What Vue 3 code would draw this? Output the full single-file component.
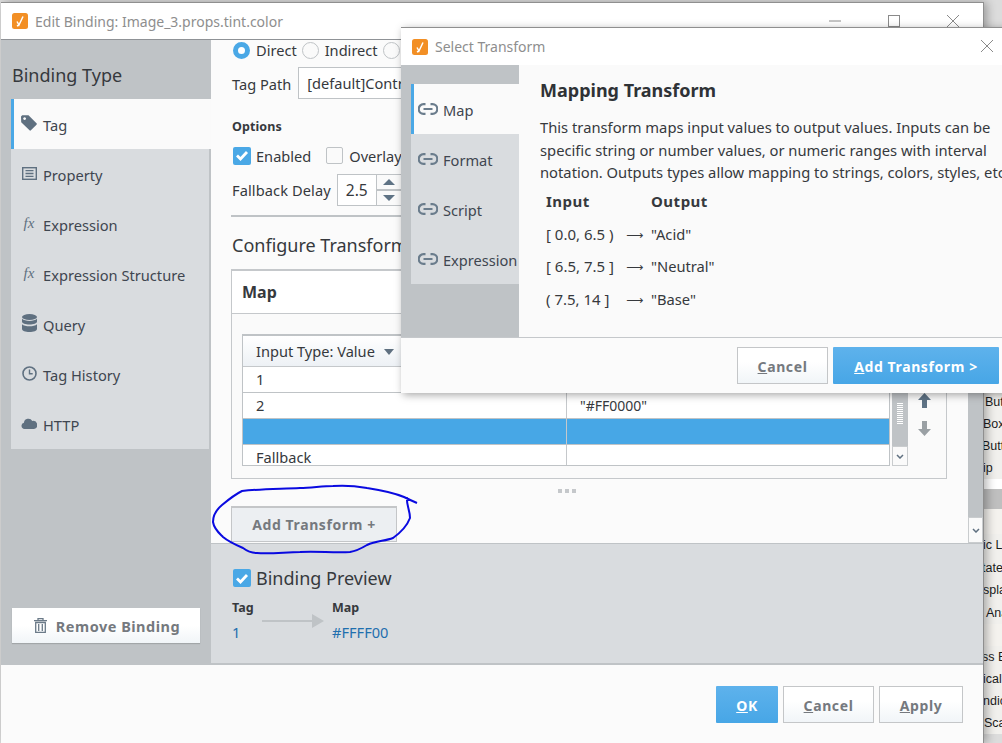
<script setup>
const sideTabs = [
  { label: 'Tag', icon: 'tag', active: true },
  { label: 'Property', icon: 'prop' },
  { label: 'Expression', icon: 'fx' },
  { label: 'Expression Structure', icon: 'fx' },
  { label: 'Query', icon: 'db' },
  { label: 'Tag History', icon: 'clock' },
  { label: 'HTTP', icon: 'cloud' }
]
const transformTabs = [
  { label: 'Map', active: true },
  { label: 'Format' },
  { label: 'Script' },
  { label: 'Expression' }
]
const mapping = [
  { input: '[ 0.0, 6.5 )', output: '"Acid"' },
  { input: '[ 6.5, 7.5 ]', output: '"Neutral"' },
  { input: '( 7.5, 14 ]', output: '"Base"' }
]
const rows = [
  { a: '1', b: '', h: 26 },
  { a: '2', b: '"#FF0000"', h: 26 },
  { a: '', b: '', h: 26, selected: true },
  { a: 'Fallback', b: '', h: 22 }
]
const backList = [
  { t: 'But', x: 45, h: 23 }, { t: 'Box', x: 43, h: 22 }, { t: 'Butt', x: 42, h: 22 }, { t: 'ip', x: 43, h: 22 },
  { gap: 10, fill: '#ffffff' }, { gap: 20, fill: '#bfbfbf' }, { gap: 25, fill: '#f4f2ee' },
  { t: 'ic L', x: 43, h: 22 }, { t: 'tate', x: 42, h: 23 }, { t: 'spla', x: 43, h: 22 }, { t: 'Ana', x: 46, h: 23 },
  { gap: 22, fill: '#f4f2ee' },
  { t: 'ss E', x: 42, h: 22 }, { t: 'ical', x: 43, h: 22 }, { t: 'ndic', x: 43, h: 22 }, { t: 'Sca', x: 44, h: 22 }
]
</script>

<template>
  <div class="desktop">
    <div class="back-list">
      <template v-for="(item, i) in backList" :key="i">
        <div v-if="item.gap" :style="{ height: item.gap + 'px', background: item.fill }"></div>
        <div v-else class="back-row" :style="{ height: item.h + 'px', paddingLeft: item.x + 'px' }">{{ item.t }}</div>
      </template>
    </div>

    <section class="window main">
      <header class="titlebar main-title">
        <svg class="app-icon" viewBox="0 0 16 16"><rect width="16" height="16" rx="2.5" fill="#f28f25"/><path d="M5 8.5 7 12 11 3.5M7 12l-2 1" fill="none" stroke="#fff" stroke-width="1.5"/></svg>
        <span class="title-text">Edit Binding: Image_3.props.tint.color</span>
        <div class="controls">
          <svg width="12" height="12" viewBox="0 0 12 12"><path d="M0 6h12" stroke="#8a8a8a"/></svg>
          <svg width="12" height="12" viewBox="0 0 12 12"><rect x=".5" y=".5" width="11" height="11" fill="none" stroke="#8a8a8a"/></svg>
          <svg width="12" height="12" viewBox="0 0 12 12"><path d="M0 0l12 12M12 0 0 12" stroke="#8a8a8a"/></svg>
        </div>
      </header>

      <div class="main-body">
        <aside class="sidebar">
          <h2 class="side-heading">Binding Type</h2>
          <nav class="side-tabs">
            <div v-for="t in sideTabs" :key="t.label" class="side-tab" :class="{ active: t.active }">
              <span class="side-icon">
                <svg v-if="t.icon === 'tag'" width="16" height="16" viewBox="0 0 16 16"><path d="M0 1.5 1.2.3 7.5.3l8 8a1 1 0 0 1 0 1.4l-5.6 5.6a1 1 0 0 1-1.4 0l-8.300-8zM3.600 2.200a1.400 1.400 0 1 0 .01 0z" fill="#5f7080" fill-rule="evenodd"/></svg>
                <svg v-else-if="t.icon === 'prop'" width="15" height="13" viewBox="0 0 15 13"><rect x=".7" y=".7" width="13.6" height="11.6" fill="none" stroke="#5f7080" stroke-width="1.4"/><path d="M3.500 3.600h8M3.500 6.500h8M3.500 9.400h8" stroke="#5f7080" stroke-width="1.400"/></svg>
                <span v-else-if="t.icon === 'fx'" class="fx">fx</span>
                <svg v-else-if="t.icon === 'db'" width="15" height="18" viewBox="0 0 15 18"><g fill="#5f7080"><ellipse cx="7.500" cy="3" rx="7.500" ry="3"/><path d="M0 4.800v3c0 1.600 3.400 2.800 7.500 2.800S15 9.400 15 7.800v-3c-1.500 1.500-4.400 2.100-7.500 2.100S1.500 6.300 0 4.800zM0 10.200v4.800C0 16.700 3.400 18 7.500 18s7.500-1.300 7.500-3v-4.800c-1.500 1.500-4.400 2.100-7.500 2.100S1.500 11.700 0 10.200z"/></g></svg>
                <svg v-else-if="t.icon === 'clock'" width="15" height="15" viewBox="0 0 15 15"><circle cx="7.500" cy="7.500" r="6.500" fill="none" stroke="#5f7080" stroke-width="1.600"/><path d="M7.500 3.500v4.300h3.200" fill="none" stroke="#5f7080" stroke-width="1.400"/></svg>
                <svg v-else width="16" height="11" viewBox="0 0 16 11"><path d="M3.500 11a3.200 3.200 0 0 1-.6-6.300A4.500 4.500 0 0 1 11.300 3 3.100 3.100 0 0 1 13 11z" fill="#5f7080"/></svg>
              </span>
              <span>{{ t.label }}</span>
            </div>
          </nav>
          <button class="remove">
            <svg width="13" height="15" viewBox="0 0 13 15"><path d="M4 2V.7h5V2M0 2.600h13M1.700 4.500h9.600V14.300H1.700zM4.700 6v7M8.300 6v7" fill="none" stroke="#6b7a88" stroke-width="1.300"/></svg>
            <span>Remove Binding</span>
          </button>
        </aside>

        <div class="content-col">
          <div class="content-scroll">
            <div class="content">
              <div class="radio-row">
                <span class="radio on"></span><span>Direct</span>
                <span class="radio"></span><span>Indirect</span>
                <span class="radio"></span><span>Expression</span>
              </div>
              <div class="path-row">
                <span>Tag Path</span>
                <div class="path-input">[default]Controller/Tag</div>
              </div>
              <div class="options">Options</div>
              <div class="check-row">
                <span class="check on"><svg width="14" height="11" viewBox="0 0 14 11"><path d="M2 5.500 5.500 9 12 2" fill="none" stroke="#fff" stroke-width="2.800"/></svg></span>
                <span>Enabled</span>
                <span class="check"></span>
                <span>Overlay Opt-Out</span>
              </div>
              <div class="delay-row">
                <span>Fallback Delay</span>
                <div class="spinner">
                  <span class="spin-val">2.5</span>
                  <span class="spin-btns"><i class="up"></i><i class="down"></i></span>
                </div>
              </div>
              <hr class="divider" />
              <h3 class="config">Configure Transforms</h3>
              <div class="map-box">
                <div class="map-head">Map</div>
                <div class="map-body">
                  <div class="grid-wrap">
                    <div class="grid">
                      <div class="grid-head">
                        <div class="cell-a head-a">Input Type: Value <i class="caret"></i></div>
                        <div class="cell-b"></div>
                      </div>
                      <div v-for="(r, i) in rows" :key="i" class="grid-row" :class="{ sel: r.selected }" :style="{ height: r.h + 'px' }">
                        <div class="cell-a">{{ r.a }}</div>
                        <div class="cell-b">{{ r.b }}</div>
                      </div>
                    </div>
                    <div class="grid-scroll">
                      <div class="grip"></div>
                      <div class="scroll-btn small"><svg width="8" height="5" viewBox="0 0 8 5"><path d="M1 1l3 3 3-3" fill="none" stroke="#5f7080" stroke-width="1.500"/></svg></div>
                    </div>
                    <div class="move">
                      <svg width="13" height="15" viewBox="0 0 13 15"><path d="M6.500 0 13 7H9v8H4V7H0z" fill="#5f7385"/></svg>
                      <svg width="13" height="15" viewBox="0 0 13 15"><path d="M6.500 15 13 8H9V0H4v8H0z" fill="#9aa0a4"/></svg>
                    </div>
                  </div>
                </div>
              </div>
              <div class="dots"><i></i><i></i><i></i></div>
              <button class="add-transform">Add Transform +</button>
            </div>
            <div class="v-scroll">
              <div class="scroll-btn"><svg width="8" height="5" viewBox="0 0 8 5"><path d="M1 1l3 3 3-3" fill="none" stroke="#5f7080" stroke-width="1.500"/></svg></div>
            </div>
          </div>
          <div class="preview">
            <div class="preview-head">
              <span class="check on"><svg width="14" height="11" viewBox="0 0 14 11"><path d="M2 5.500 5.500 9 12 2" fill="none" stroke="#fff" stroke-width="2.800"/></svg></span>
              <span>Binding Preview</span>
            </div>
            <div class="flow">
              <div class="flow-col">
                <b>Tag</b>
                <span class="val">1</span>
              </div>
              <svg class="flow-arrow" width="62" height="14" viewBox="0 0 62 14"><path d="M0 6h50v2H0z" fill="#bfc3c6"/><path d="M50 0l12 7-12 7z" fill="#bfc3c6"/></svg>
              <div class="flow-col">
                <b>Map</b>
                <span class="val">#FFFF00</span>
              </div>
            </div>
          </div>
        </div>
      </div>

      <footer class="main-foot">
        <button class="btn primary ok"><u>O</u>K</button>
        <button class="btn cancel-main"><u>C</u>ancel</button>
        <button class="btn apply"><u>A</u>pply</button>
      </footer>
    </section>

    <svg class="scribble" width="1002" height="743" viewBox="0 0 1002 743">
      <path d="M417 503C410 500 406 498 404 497C392 492 380 490 367 488C356 486 345 485 333 486C322 486 311 488 300 488C280 489 260 489 242 491C234 495 228 500 222 505C216 510 213 516 213 522C214 529 219 533 223 537C229 542 236 545 243 548C247 551 252 553 257 553C272 554 286 552 300 552C317 551 334 553 350 552C357 551 362 548 367 545C376 541 385 541 393 538C400 533 407 526 410 518C410 510 406 504 407 497" fill="none" stroke="#0a0ae0" stroke-width="2"/>
    </svg>

    <section class="window modal">
      <header class="titlebar modal-title">
        <svg class="app-icon" viewBox="0 0 16 16"><rect width="16" height="16" rx="2.500" fill="#f28f25"/><path d="M5 8.500 7 12 11 3.500M7 12l-2 1" fill="none" stroke="#fff" stroke-width="1.500"/></svg>
        <span class="title-text">Select Transform</span>
        <svg class="modal-x" width="12" height="12" viewBox="0 0 12 12"><path d="M0 0l12 12M12 0 0 12" stroke="#8a8a8a"/></svg>
      </header>
      <div class="modal-body">
        <aside class="modal-side">
          <div v-for="t in transformTabs" :key="t.label" class="modal-tab" :class="{ active: t.active }">
            <svg width="20" height="12" viewBox="0 0 20 12"><path d="M7.500 1.200H5.500a4.800 4.800 0 0 0 0 9.600h2M12.500 1.200h2a4.800 4.800 0 0 1 0 9.600h-2M5.500 6h9" fill="none" stroke="#6a7c8c" stroke-width="2.200"/></svg>
            <span>{{ t.label }}</span>
          </div>
        </aside>
        <div class="modal-content">
          <h2 class="modal-heading">Mapping Transform</h2>
          <p class="modal-desc">
            <span>This transform maps input values to output values. Inputs can be</span>
            <span>specific string or number values, or numeric ranges with interval</span>
            <span>notation. Outputs types allow mapping to strings, colors, styles, etc.</span>
          </p>
          <div class="map-table">
            <div class="mt-head"><b>Input</b><b>Output</b></div>
            <div v-for="m in mapping" :key="m.input" class="mt-row">
              <span class="mt-in">{{ m.input }}</span>
              <span class="mt-arrow">⟶</span>
              <span class="mt-out">{{ m.output }}</span>
            </div>
          </div>
        </div>
      </div>
      <footer class="modal-foot">
        <button class="btn modal-cancel"><u>C</u>ancel</button>
        <button class="btn primary add"><u>A</u>dd Transform &gt;</button>
      </footer>
    </section>
  </div>
</template>

<style>
html, body { margin: 0; overflow: hidden; background: #d8d8d8; }
</style>

<style scoped>
.desktop {
  position: relative;
  width: 1002px;
  height: 743px;
  overflow: hidden;
  font-family: "Noto Sans", "Open Sans", sans-serif;
  font-size: 14px;
  color: #36393d;
  background: #dcdcdc;
}
.back-list {
  position: absolute;
  left: 940px;
  top: 0;
  width: 62px;
  padding-top: 390px;
  font-family: "Liberation Sans", sans-serif;
  font-size: 12.5px;
  color: #1c1c1c;
}
.back-row { display: flex; align-items: center; white-space: nowrap; box-sizing: border-box; background: #f1f0ed; }
.window {
  position: absolute;
  background: #fbfbfb;
  box-sizing: border-box;
  display: flex;
  flex-direction: column;
}
.main {
  left: 1px;
  top: 2px;
  width: 983px;
  height: 741px;
  border-top: 1px solid #8f8f8f;
  border-right: 1px solid #8f8f8f;
  box-shadow: 3px 0 9px rgba(0,0,0,.3);
}
.modal {
  left: 401px;
  top: 27px;
  width: 640px;
  height: 366px;
  border-top: 1px solid #8f8f8f;
  box-shadow: 2px 2px 8px rgba(0,0,0,.35);
}
.titlebar { display: flex; align-items: center; background: #fff; flex: none; color: #8e8e8e; }
.main-title { height: 37px; padding-left: 11px; font-size: 14px; border-bottom: 1px solid #8f9296; box-sizing: border-box; }
.main-title .app-icon { width: 16px; height: 16px; }
.title-text { margin-left: 7px; }
.controls { margin-left: auto; display: flex; gap: 47px; padding-right: 24px; }
.modal-title { height: 37px; padding-left: 11px; font-size: 14px; }
.modal-title .app-icon { width: 16px; height: 16px; }
.modal-x { position: absolute; left: 580px; top: 12px; }
.main-body { display: flex; height: 625px; flex: none; }
.sidebar {
  width: 210px;
  flex: none;
  background: #bfc3c6;
  display: flex;
  flex-direction: column;
  padding: 0 0 22px 10px;
  box-sizing: border-box;
}
.side-heading { margin: 0; font-size: 18px; font-weight: 400; height: 59px; padding-top: 22px; padding-left: 1px; box-sizing: border-box; line-height: 26px; }
.side-tabs { width: 198px; background: #d9dcdf; }
.side-tab { height: 50px; display: flex; align-items: center; padding: 2px 0 0 10px; gap: 6px; box-sizing: border-box; font-size: 14.65px; color: #3f4650; }
.side-tab.active { background: #fafafa; width: 200px; border-left: 3px solid #4aa8e6; padding-left: 7px; }
.side-icon { width: 16px; height: 18px; display: flex; align-items: center; justify-content: center; flex: none; margin-top: -4px; }
.fx { font-family: "Liberation Serif", serif; font-style: italic; font-size: 15px; color: #5f7080; }
.remove {
  margin-top: auto;
  margin-left: 1px;
  width: 188px;
  height: 35px;
  border: 0;
  background: linear-gradient(#fff 50%, #f1f5f8);
  box-shadow: 0 1px 1px rgba(0,0,0,.15);
  font: 700 14.5px "Noto Sans", sans-serif;
  color: #75797e;
  display: flex;
  align-items: center;
  justify-content: center;
  gap: 9px;
  letter-spacing: .5px;
  padding: 0 0 0 2px;
}
.content-col { flex: 1; min-width: 0; display: flex; flex-direction: column; }
.content-scroll { height: 503px; flex: none; display: flex; overflow: hidden; }
.content { flex: 1; min-width: 0; padding: 0 21px 0 20px; box-sizing: border-box; }
.v-scroll { width: 15px; flex: none; background: #bfc3c6; display: flex; flex-direction: column; justify-content: flex-end; }
.scroll-btn { height: 26px; background: #fafafa; display: flex; align-items: center; justify-content: center; border: 1px solid #c9ccce; box-sizing: border-box; }
.scroll-btn.small { height: 20px; }
.radio-row { height: 20px; display: flex; align-items: center; gap: 6px; white-space: nowrap; font-size: 14.6px; margin-left: 2px; }
.radio { width: 17px; height: 17px; border-radius: 50%; border: 1px solid #bfc3c6; background: #fafafa; box-sizing: border-box; flex: none; margin-left: -1px; }
.radio.on { border: 5px solid #4aa8e6; background: #fff; margin-left: 0; }
.path-row { margin-top: 7px; height: 32px; display: flex; align-items: center; gap: 7px; font-size: 14.6px; padding-left: 1px; }
.path-row > span { padding-top: 2px; }
.path-input { width: 400px; height: 32px; box-sizing: border-box; border: 1px solid #bfc3c6; border-right: 0; padding-left: 8px; line-height: 30px; background: #fff; white-space: nowrap; flex: none; }
.options { margin-top: 18px; font-size: 12.5px; font-weight: 700; line-height: 20px; padding-left: 1px; letter-spacing: .1px; }
.check-row { margin-top: 7px; height: 23px; display: flex; align-items: center; white-space: nowrap; font-size: 14.6px; padding-left: 2px; }
.check { width: 18px; height: 18px; border-radius: 2px; border: 1px solid #bfc3c6; box-sizing: border-box; background: #fafafa; display: inline-flex; align-items: center; justify-content: center; flex: none; }
.check.on { background: #4aa8e6; border: 0; }
.check-row .check.on { margin-right: 5px; }
.check-row .check:not(.on) { margin-left: 15px; margin-right: 6px; width: 17px; height: 17px; }
.delay-row { margin-top: 7px; height: 32px; display: flex; align-items: center; gap: 6px; font-size: 14.6px; padding-left: 1px; }
.delay-row > span { letter-spacing: .1px; }
.spinner { display: flex; width: 100px; height: 32px; border: 1px solid #bfc3c6; box-sizing: border-box; background: #fff; flex: none; }
.spin-val { width: 38px; text-align: center; line-height: 30px; font-size: 15.5px; }
.spin-btns { display: flex; flex-direction: column; border-left: 1px solid #bfc3c6; width: 30px; background: #fafafa; }
.spin-btns i { flex: 1; position: relative; }
.spin-btns .up { border-bottom: 2px solid #bfc3c6; }
.spin-btns .up::after, .spin-btns .down::after { content: ""; position: absolute; left: 6px; top: 4px; border: 6px solid transparent; border-top: 0; border-bottom: 6px solid #5f7385; }
.spin-btns .down::after { border-bottom: 0; border-top: 6px solid #5f7385; }
.divider { margin: 9px 0 0; border: 0; border-top: 2px solid #bfc3c6; }
.config { margin: 15px 0 0 1px; font-size: 18px; font-weight: 400; line-height: 26px; white-space: nowrap; height: 27px; }
.map-box { margin-top: 10px; height: 210px; border: 1px solid #c5c8cb; border-top-width: 2px; box-sizing: border-box; background: #fafafa; }
.map-head { height: 43px; border-bottom: 1px solid #c5c8cb; font-size: 16px; font-weight: 700; padding-left: 10px; line-height: 43px; box-sizing: border-box; background: #fff; }
.map-body { padding: 20px 10px 0; }
.grid-wrap { display: flex; }
.grid { width: 648px; border: 1px solid #bfc3c6; border-top-width: 2px; box-sizing: border-box; background: #fff; height: 132px; overflow: hidden; flex: none; }
.grid-head { display: flex; height: 31px; background: linear-gradient(#fff, #edf1f5); border-bottom: 1px solid #c5c8cb; box-sizing: border-box; }
.grid-row { display: flex; border-bottom: 1px solid #bfc3c6; box-sizing: border-box; }
.grid-row:last-child { border-bottom: 0; }
.grid-row.sel { background: #47a7e6; }
.cell-a { width: 324px; flex: none; box-sizing: border-box; padding-left: 13px; border-right: 1px solid #c5c8cb; line-height: 25px; font-size: 14.6px; }
.cell-b { flex: 1; padding-left: 13px; line-height: 25px; font-size: 14px; }
.head-a { border-right: 0; padding-left: 13px; line-height: 30px; }
.caret { display: inline-block; margin-left: 5px; border: 5.5px solid transparent; border-top: 6px solid #5f7080; border-bottom: 0; vertical-align: 2px; }
.grid-scroll { width: 16px; margin-left: 2px; height: 132px; background: #bfc3c6; display: flex; flex-direction: column; justify-content: flex-end; flex: none; position: relative; }
.grip { position: absolute; left: 5px; top: 69px; width: 6px; height: 22px; background: repeating-linear-gradient(#fff 0 1px, transparent 1px 2px); }
.move { display: flex; flex-direction: column; gap: 13px; margin-left: 10px; padding-top: 59px; }
.dots { display: flex; justify-content: flex-start; gap: 3px; margin-top: 10px; height: 5px; padding-left: 327px; }
.dots i { width: 4px; height: 4px; background: #c5c8cb; }
.add-transform {
  display: block;
  margin-top: 12px;
  width: 166px;
  height: 36px;
  background: #eceff2;
  border: 1px solid #c4c6c8;
  border-top-width: 2px;
  font: 700 14px "Noto Sans", sans-serif;
  color: #75797e;
  letter-spacing: .6px;
  padding: 0;
}
.preview { flex: 1; background: #d9dcdf; border-bottom: 2px solid #bfc3c6; border-top: 1px solid #bfc3c6; padding: 22px 0 0 22px; box-sizing: border-box; }
.preview-head { display: flex; align-items: center; gap: 5px; font-size: 18px; height: 26px; margin-top: -1px; }
.flow { display: flex; margin-top: 7px; margin-left: -1px; }
.flow-col { display: flex; flex-direction: column; min-width: 30px; line-height: 20px; }
.flow-col b { font-size: 12.5px; }
.val { color: #1f6fae; font-size: 14.6px; margin-top: 4px; }
.flow-arrow { margin: 16px 8px 0 0; flex: none; }
.main-foot { flex: 1; display: flex; align-items: flex-start; padding-top: 21px; gap: 5px; padding-left: 715px; background: #fbfbfb; }
.btn {
  height: 37px;
  box-sizing: border-box;
  border: 1px solid #c4c6c8;
  background: linear-gradient(#fff 40%, #f1f5f8);
  font: 700 14px "Noto Sans", sans-serif;
  color: #75797e;
  letter-spacing: .6px;
  padding: 2px 0 0;
  flex: none;
}
.btn.primary { background: linear-gradient(#5eb2ec, #47a6e6); border: 0; color: #fff; border-radius: 1px; }
.ok { width: 62px; }
.cancel-main { width: 91px; }
.apply { width: 84px; }
.modal-body { display: flex; height: 272px; flex: none; }
.modal-side { width: 118px; background: #bfc3c6; padding: 19px 0 0 10px; box-sizing: border-box; flex: none; }
.modal-tab { height: 50px; background: #d9dcdf; display: flex; align-items: center; gap: 5px; padding: 2px 0 0 7px; font-size: 14.6px; color: #3f4650; box-sizing: border-box; white-space: nowrap; overflow: hidden; }
.modal-tab.active { background: #fafafa; border-left: 3px solid #4aa8e6; padding-left: 4px; }
.modal-tab svg { flex: none; margin-top: -3px; }
.modal-content { flex: 1; padding: 12px 0 0 21px; background: #fafafa; min-width: 0; }
.modal-heading { margin: 0; font-size: 18px; font-weight: 700; line-height: 26px; color: #2f3236; }
.modal-desc { margin: 13px 0 0; font-size: 14.75px; line-height: 22.5px; }
.modal-desc span { display: block; white-space: nowrap; }
.map-table { margin: 6px 0 0 6px; font-size: 15px; }
.mt-head { display: flex; line-height: 22px; margin-bottom: 6px; }
.mt-head b { width: 105px; letter-spacing: .5px; }
.mt-row { display: flex; height: 32.5px; align-items: center; }
.mt-in { width: 80px; flex: none; white-space: nowrap; }
.mt-arrow { width: 25px; flex: none; font-family: "DejaVu Sans", sans-serif; font-size: 12px; padding-top: 2px; }
.mt-out { font-size: 14.7px; }
.modal-foot { flex: 1; border-top: 1px solid #c5c8cb; display: flex; gap: 5px; padding: 9px 0 0 336px; background: #fbfbfb; box-sizing: border-box; }
.modal-cancel { width: 91px; }
.add { width: 166px; }
.scribble { position: absolute; left: 0; top: 0; pointer-events: none; }
</style>
